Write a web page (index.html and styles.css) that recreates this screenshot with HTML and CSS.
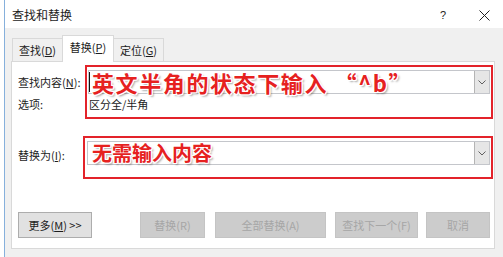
FILE: index.html
```html
<!DOCTYPE html>
<html lang="zh-CN">
<head>
<meta charset="utf-8">
<title>查找和替换</title>
<link rel="stylesheet" href="styles.css">
</head>
<body>
<div class="dialog">
  <div class="titlebar">
    <span class="title">查找和替换</span>
    <span class="help">?</span>
    <span class="close"><svg width="11" height="11" viewBox="0 0 11 11"><path d="M0.5 0.5L10.5 10.5M10.5 0.5L0.5 10.5" stroke="#222" stroke-width="1" fill="none"/></svg></span>
  </div>
  <div class="body">
    <div class="tabs">
      <div class="tab t1">查找(<u>D</u>)</div>
      <div class="tab active">替换(<u>P</u>)</div>
      <div class="tab t3">定位(<u>G</u>)</div>
    </div>
    <div class="panel">
      <div class="row row-find">
        <div class="labels lab1">
          <div class="label l-find">查找内容(<u>N</u>):</div>
          <div class="label l-opt">选项:</div>
        </div>
        <div class="redbox rb1">
          <div class="combo">
            <div class="combo-text"><span class="caret"></span><span class="big big1">英文半角的状态下输入 “^b”</span></div>
            <div class="dd"><svg width="8" height="5" viewBox="0 0 8 5"><path d="M0.5 0.5L4 4L7.5 0.5" stroke="#606060" stroke-width="1" fill="none"/></svg></div>
          </div>
          <div class="opts">区分全/半角</div>
        </div>
      </div>
      <div class="row row-repl">
        <div class="labels lab2">
          <div class="label l-repl">替换为(<u>I</u>):</div>
        </div>
        <div class="redbox rb2">
          <div class="combo">
            <div class="combo-text"><span class="big big2">无需输入内容</span></div>
            <div class="dd"><svg width="8" height="5" viewBox="0 0 8 5"><path d="M0.5 0.5L4 4L7.5 0.5" stroke="#606060" stroke-width="1" fill="none"/></svg></div>
          </div>
        </div>
      </div>
      <div class="buttons">
        <div class="btn b-more">更多(<u>M</u>) &gt;&gt;</div>
        <div class="btn disabled b-repl">替换(R)</div>
        <div class="btn disabled b-all">全部替换(A)</div>
        <div class="btn disabled b-next">查找下一个(F)</div>
        <div class="btn disabled b-cancel">取消</div>
      </div>
    </div>
  </div>
</div>
</body>
</html>
```

FILE: styles.css
```css
html, body {
  margin: 0;
  padding: 0;
  background: #ffffff;
}
body {
  width: 503px;
  height: 257px;
  overflow: hidden;
  font-family: "Noto Sans CJK SC", "Noto Sans", sans-serif;
  font-size: 11px;
  color: #1c1c1c;
}
u { text-decoration: underline; text-underline-offset: 1px; }

.dialog {
  margin-left: 4px;
  border-left: 1px solid #86b0dc;
  height: 257px;
  display: flex;
  flex-direction: column;
}

.titlebar {
  height: 28px;
  background: #ffffff;
  display: flex;
  align-items: center;
  flex: none;
}
.title {
  padding-left: 7px;
  font-size: 12px;
  line-height: 14px;
  margin-top: 2px;
}
.help {
  margin-left: auto;
  font-family: "Liberation Sans", sans-serif;
  font-size: 11px;
  margin-right: 33px;
  margin-top: 2px;
}
.close {
  display: flex;
  margin-right: 13px;
  margin-top: 2px;
}

.body {
  flex: 1;
  background: #f0f0f0;
  padding: 7px 8px 0 6px;
}

.tabs {
  display: flex;
  align-items: flex-end;
  height: 26px;
}
.tab {
  box-sizing: border-box;
  height: 23px;
  border: 1px solid #d9d9d9;
  border-bottom: none;
  background: #f0f0f0;
  display: flex;
  align-items: center;
  justify-content: center;
  line-height: 14px;
}
.t1 { width: 50px; margin-left: 1px; border-right: none; }
.t3 { width: 50px; border-left: none; }
.tab.active {
  width: 52px;
  height: 27px;
  background: #ffffff;
  margin-bottom: -1px;
  position: relative;
  z-index: 1;
  padding-bottom: 4px;
}

.panel {
  background: #ffffff;
  border: 1px solid #d9d9d9;
  height: 186px;
  padding-left: 6px;
}

.row {
  display: flex;
}
.row-find { margin-top: 3px; }
.row-repl { margin-top: 17px; }

.labels {
  flex: none;
  display: flex;
  flex-direction: column;
}
.lab1 { width: 67px; }
.lab2 { width: 65px; }
.label { line-height: 14px; white-space: nowrap; }
.l-find { margin-top: 10px; }
.l-opt { margin-top: 8px; }
.l-repl { margin-top: 12px; }

.redbox {
  flex: 1;
  border: 2px solid #e3232a;
  margin-right: 1px;
}
.rb1 { padding: 3px 1px 6px 1px; }
.rb2 { padding: 3px 1px 12px 2px; }

.combo {
  box-sizing: border-box;
  height: 24px;
  border: 1px solid #c4c6cb;
  background: #ffffff;
  display: flex;
  align-items: stretch;
}
.combo-text {
  flex: 1;
  display: flex;
  align-items: center;
  overflow: visible;
}
.caret {
  width: 1px;
  height: 20px;
  background: #111;
  flex: none;
}
.big {
  font-weight: bold;
  color: #e6211f;
  white-space: nowrap;
  text-shadow: 1px 0 0 #fff, -1px 0 0 #fff, 0 1px 0 #fff, 0 -1px 0 #fff,
    1px 1px 0 #fff, -1px -1px 0 #fff, 1px -1px 0 #fff, -1px 1px 0 #fff,
    2px 2px 2px rgba(0, 0, 0, 0.35);
}
.big1 {
  font-size: 22px;
  line-height: 24px;
  margin-left: 2px;
  letter-spacing: 1.6px;
}
.big2 {
  font-size: 20px;
  line-height: 24px;
  margin-left: 4px;
}
.dd {
  width: 14px;
  background: #e6e6e6;
  border-left: 1px solid #b4b4b4;
  display: flex;
  align-items: center;
  justify-content: center;
}

.opts {
  margin-top: 3px;
  line-height: 14px;
  padding-left: 1px;
}

.buttons {
  display: flex;
  margin-top: 33px;
}
.btn {
  box-sizing: border-box;
  height: 26px;
  display: flex;
  align-items: center;
  justify-content: center;
  border: 1px solid #adadad;
  background: #e1e1e1;
  white-space: nowrap;
  line-height: 14px;
}
.btn.disabled {
  background: #cccccc;
  border-color: #c4c4c4;
  color: #a6a6a6;
}
.b-more { width: 74px; }
.b-repl { width: 65px; margin-left: 48px; }
.b-all { width: 111px; margin-left: 10px; }
.b-next { width: 83px; margin-left: 9px; }
.b-cancel { width: 64px; margin-left: 8px; background: #d9d9d9; }
```
